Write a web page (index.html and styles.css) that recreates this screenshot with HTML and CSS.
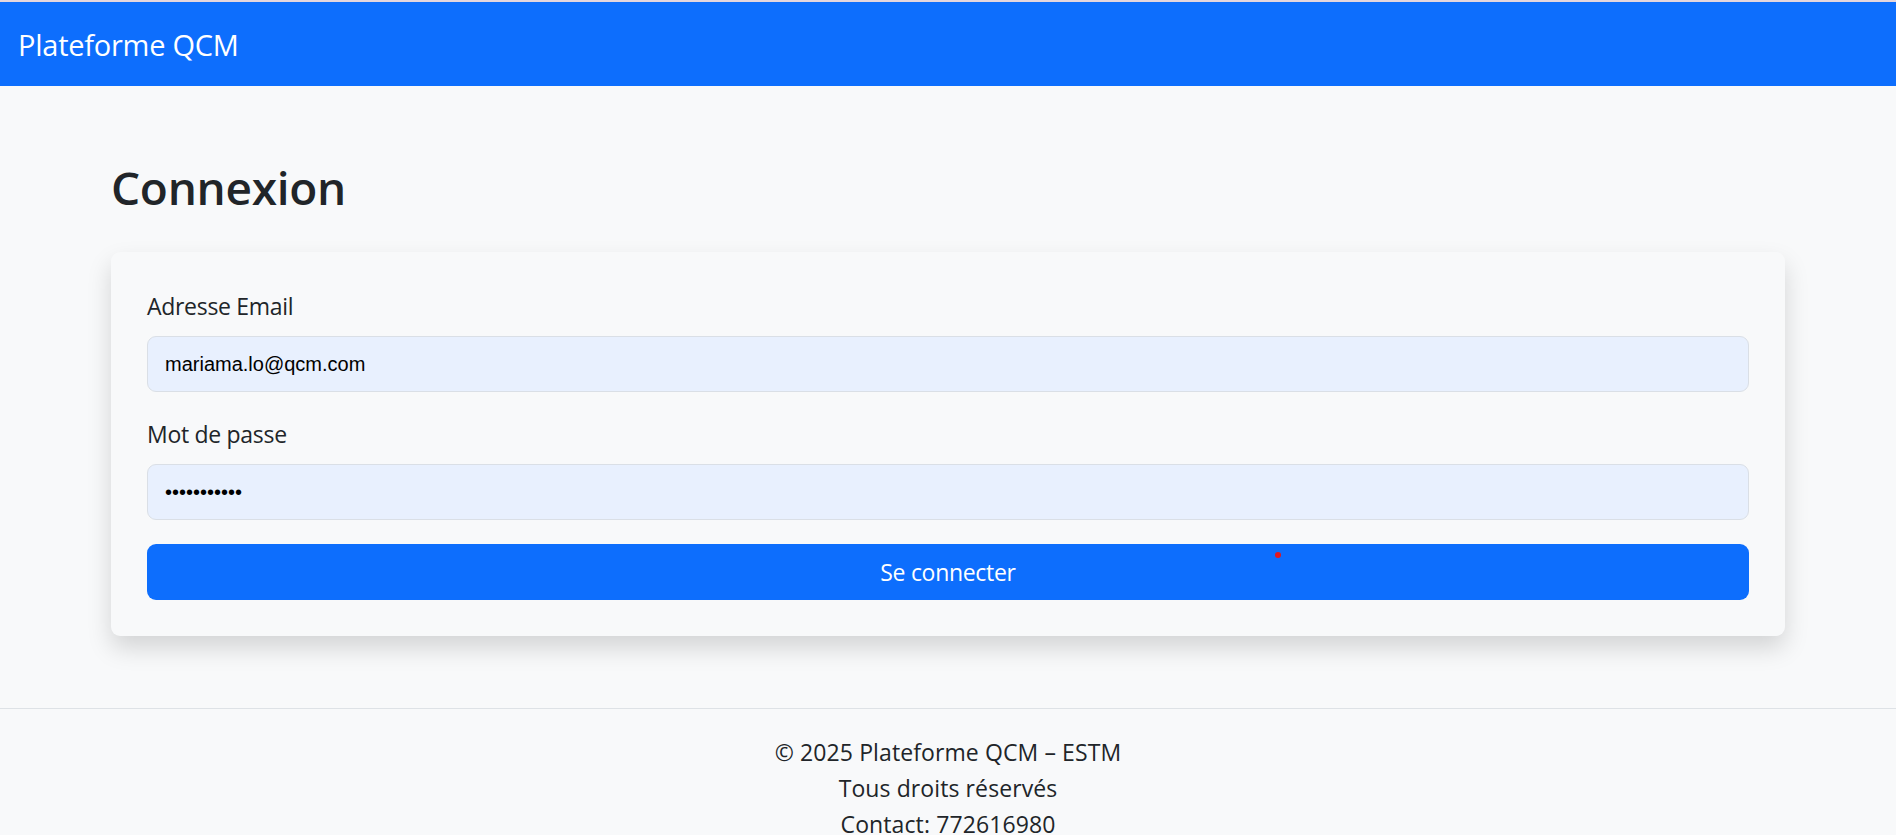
FILE: index.html
```html
<!DOCTYPE html>
<html lang="fr">
<head>
<meta charset="utf-8">
<title>Connexion - Plateforme QCM</title>
<link rel="stylesheet" href="styles.css">
</head>
<body>
<div class="topline"></div>
<nav class="navbar">
  <a class="brand" href="#">Plateforme QCM</a>
</nav>
<main class="container">
  <h2 class="title">Connexion</h2>
  <form class="card">
    <div class="field">
      <label class="label" for="email">Adresse Email</label>
      <input class="input" id="email" type="text" value="mariama.lo@qcm.com">
    </div>
    <div class="field">
      <label class="label" for="pwd">Mot de passe</label>
      <input class="input" id="pwd" type="password" value="abcdefghijk">
    </div>
    <button class="btn" type="button">Se connecter</button>
  </form>
</main>
<footer class="footer">
  <p>© 2025 Plateforme QCM – ESTM</p>
  <p>Tous droits réservés</p>
  <p>Contact: 772616980</p>
</footer>
<div class="cursor-dot"></div>
</body>
</html>
```
FILE: styles.css
```css
* { box-sizing: border-box; }
html, body { margin: 0; padding: 0; }
body {
  background: #f8f9fa;
  color: #212529;
  font-family: "Open Sans", "Noto Sans", sans-serif;
  font-size: 23px;
  letter-spacing: -0.3px;
  line-height: 36px;
  overflow: hidden;
  height: 835px;
}
.topline { height: 2px; background: #e4d6dd; }
.navbar {
  height: 84px;
  background: #0d6efd;
  display: flex;
  align-items: center;
  padding: 0 18px;
}
.brand {
  color: #fff;
  text-decoration: none;
  font-size: 29px;
  letter-spacing: -0.25px;
  line-height: 45px;
}
.container {
  width: 1674px;
  margin: 72px auto 0;
}
.title {
  font-size: 46px;
  font-weight: 600;
  letter-spacing: -0.3px;
  line-height: 58px;
  margin: 0 0 36px;
  color: #212529;
}
.card {
  background: #f8f9fa;
  border-radius: 9px;
  box-shadow: 0 12px 24px rgba(0,0,0,0.15);
  padding: 36px;
  display: flex;
  flex-direction: column;
}
.field { display: flex; flex-direction: column; margin-bottom: 24px; }
.label { display: block; margin-bottom: 12px; }
.input {
  height: 56px;
  width: 100%;
  border: 1.5px solid #dadfe6;
  border-radius: 9px;
  background: #e8f0fe;
  padding: 0 17px;
  font-family: "Liberation Sans", Arial, sans-serif;
  font-size: 20px;
  letter-spacing: 0;
  color: #000;
  outline: none;
}
.btn {
  height: 56px;
  width: 100%;
  border: 0;
  border-radius: 9px;
  background: #0d6efd;
  color: #fff;
  font-family: inherit;
  font-size: 23px;
  letter-spacing: -0.3px;
  cursor: pointer;
}
.footer {
  margin-top: 72px;
  border-top: 1.5px solid #dee2e6;
  padding-top: 25px;
  text-align: center;
  letter-spacing: 0.1px;
}
.footer p { margin: 0; }
.cursor-dot {
  position: absolute;
  left: 1275px;
  top: 552px;
  width: 6px;
  height: 6px;
  border-radius: 50%;
  background: #e3161e;
}
```
